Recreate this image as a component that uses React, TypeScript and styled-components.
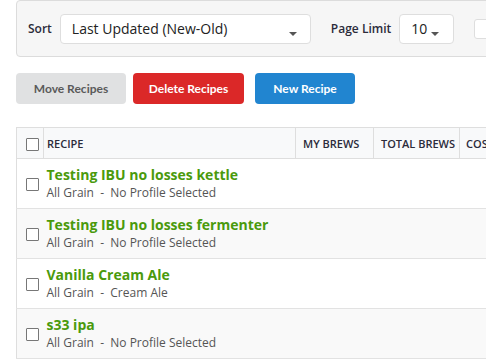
import * as React from 'react';
import styled, { createGlobalStyle } from 'styled-components';

const GlobalStyle = createGlobalStyle`
  html, body {
    margin: 0;
    padding: 0;
    background: #ffffff;
    overflow: hidden;
  }
  body {
    font-family: 'Open Sans', 'DejaVu Sans', sans-serif;
    color: #333;
  }
`;

const Page = styled.div`
  width: 486px;
  height: 361px;
  overflow: hidden;
  padding-left: 16px;
  box-sizing: border-box;
`;

const FilterPanel = styled.div`
  display: flex;
  align-items: center;
  width: 520px;
  height: 57px;
  box-sizing: border-box;
  padding: 0 0 0 11px;
  background: #f6f6f6;
  border: 1px solid #dcdcdc;
  border-radius: 4px;
`;

const FilterLabel = styled.span`
  font-size: 12px;
  font-weight: 600;
  color: #2b2b3a;
  margin-right: 8px;
`;

const Select = styled.div<{ $width: number }>`
  position: relative;
  display: flex;
  align-items: center;
  width: ${(p) => p.$width}px;
  height: 30px;
  box-sizing: border-box;
  padding-left: 11px;
  background: #fff;
  border: 1px solid #dedede;
  border-radius: 4px;
  font-size: 14px;
  color: #222;
  margin-right: 20px;
`;

const Caret = styled.span<{ $right: number }>`
  position: absolute;
  right: ${(p) => p.$right}px;
  top: 17px;
  width: 0;
  height: 0;
  border-left: 4px solid transparent;
  border-right: 4px solid transparent;
  border-top: 4px solid #555;
`;

const SmallBox = styled.div`
  width: 40px;
  height: 18px;
  background: #fff;
  border: 1px solid #dedede;
  border-radius: 3px;
`;

const ButtonRow = styled.div`
  display: flex;
  gap: 7px;
  margin-top: 16px;
`;

const Button = styled.button<{ $variant: 'grey' | 'red' | 'blue'; $width: number; $gapBefore?: number }>`
  width: ${(p) => p.$width}px;
  height: 31px;
  margin-left: ${(p) => p.$gapBefore ?? 0}px;
  border: none;
  border-radius: 4px;
  font-family: Lato, 'Liberation Sans', sans-serif;
  font-weight: 700;
  font-size: 12px;
  cursor: pointer;
  background: ${(p) => (p.$variant === 'grey' ? '#e0e1e2' : p.$variant === 'red' ? '#db2828' : '#2185d0')};
  color: ${(p) => (p.$variant === 'grey' ? '#5a5a5a' : '#ffffff')};
`;

const Table = styled.table`
  margin-top: 23px;
  border-collapse: collapse;
  table-layout: fixed;
  width: 563px;
  border-left: 1px solid #dedede;
  border-top: 1px solid #dedede;
`;

const HeadCell = styled.th<{ $pad?: number }>`
  height: 30px;
  padding: 0 0 0 ${(p) => p.$pad ?? 7}px;
  text-align: left;
  font-size: 11px;
  font-weight: 600;
  color: #2b2b3a;
  background: #f8f9fa;
  border-right: 1px solid #dedede;
  border-bottom: 1px solid #dedede;
  white-space: nowrap;
  overflow: hidden;
`;

const Row = styled.tr<{ $striped: boolean }>`
  background: ${(p) => (p.$striped ? '#f9f9f9' : '#ffffff')};
  border-bottom: 1px solid #e2e2e2;
`;

const Cell = styled.td<{ $pad?: number }>`
  height: 49px;
  padding: 0 0 0 ${(p) => p.$pad ?? 0}px;
  vertical-align: middle;
`;

const CheckCell = styled.div`
  display: flex;
  padding: 2px 0 0 9px;
`;

const Checkbox = styled.span`
  display: block;
  width: 11px;
  height: 11px;
  border: 1px solid #777;
  border-radius: 1px;
  background: #fff;
`;

const RecipeName = styled.div`
  font-size: 14px;
  font-weight: 700;
  color: #4a9a0c;
  line-height: 18px;
`;

const RecipeMeta = styled.div`
  font-size: 12px;
  color: #555;
  line-height: 18px;
  white-space: pre;
`;

const RECIPES = [
  { name: 'Testing IBU no losses kettle', type: 'All Grain', style: 'No Profile Selected' },
  { name: 'Testing IBU no losses fermenter', type: 'All Grain', style: 'No Profile Selected' },
  { name: 'Vanilla Cream Ale', type: 'All Grain', style: 'Cream Ale' },
  { name: 's33 ipa', type: 'All Grain', style: 'No Profile Selected' },
];

const COLUMN_WIDTHS = [27, 252, 78, 86, 120];

const App = () => {
  return (
    <Page>
      <GlobalStyle />
      <FilterPanel>
        <FilterLabel>Sort</FilterLabel>
        <Select $width={251}>
          Last Updated (New-Old)
          <Caret $right={13} />
        </Select>
        <FilterLabel>Page Limit</FilterLabel>
        <Select $width={55}>
          10
          <Caret $right={14} />
        </Select>
        <SmallBox />
      </FilterPanel>
      <ButtonRow>
        <Button $variant="grey" $width={110}>Move Recipes</Button>
        <Button $variant="red" $width={111}>Delete Recipes</Button>
        <Button $variant="blue" $width={100} $gapBefore={4}>New Recipe</Button>
      </ButtonRow>
      <Table>
        <colgroup>
          {COLUMN_WIDTHS.map((w, i) => (
            <col key={i} style={{ width: w }} />
          ))}
        </colgroup>
        <thead>
          <tr>
            <HeadCell $pad={0}>
              <CheckCell>
                <Checkbox />
              </CheckCell>
            </HeadCell>
            <HeadCell $pad={3}>RECIPE</HeadCell>
            <HeadCell>MY BREWS</HeadCell>
            <HeadCell>TOTAL BREWS</HeadCell>
            <HeadCell $pad={6}>COST</HeadCell>
          </tr>
        </thead>
        <tbody>
          {RECIPES.map((recipe, i) => (
            <Row key={recipe.name} $striped={i % 2 === 1}>
              <Cell>
                <CheckCell>
                  <Checkbox />
                </CheckCell>
              </Cell>
              <Cell $pad={3}>
                <RecipeName>{recipe.name}</RecipeName>
                <RecipeMeta>{`${recipe.type}  -  ${recipe.style}`}</RecipeMeta>
              </Cell>
              <Cell />
              <Cell />
              <Cell />
            </Row>
          ))}
        </tbody>
      </Table>
    </Page>
  );
};

export default App;
